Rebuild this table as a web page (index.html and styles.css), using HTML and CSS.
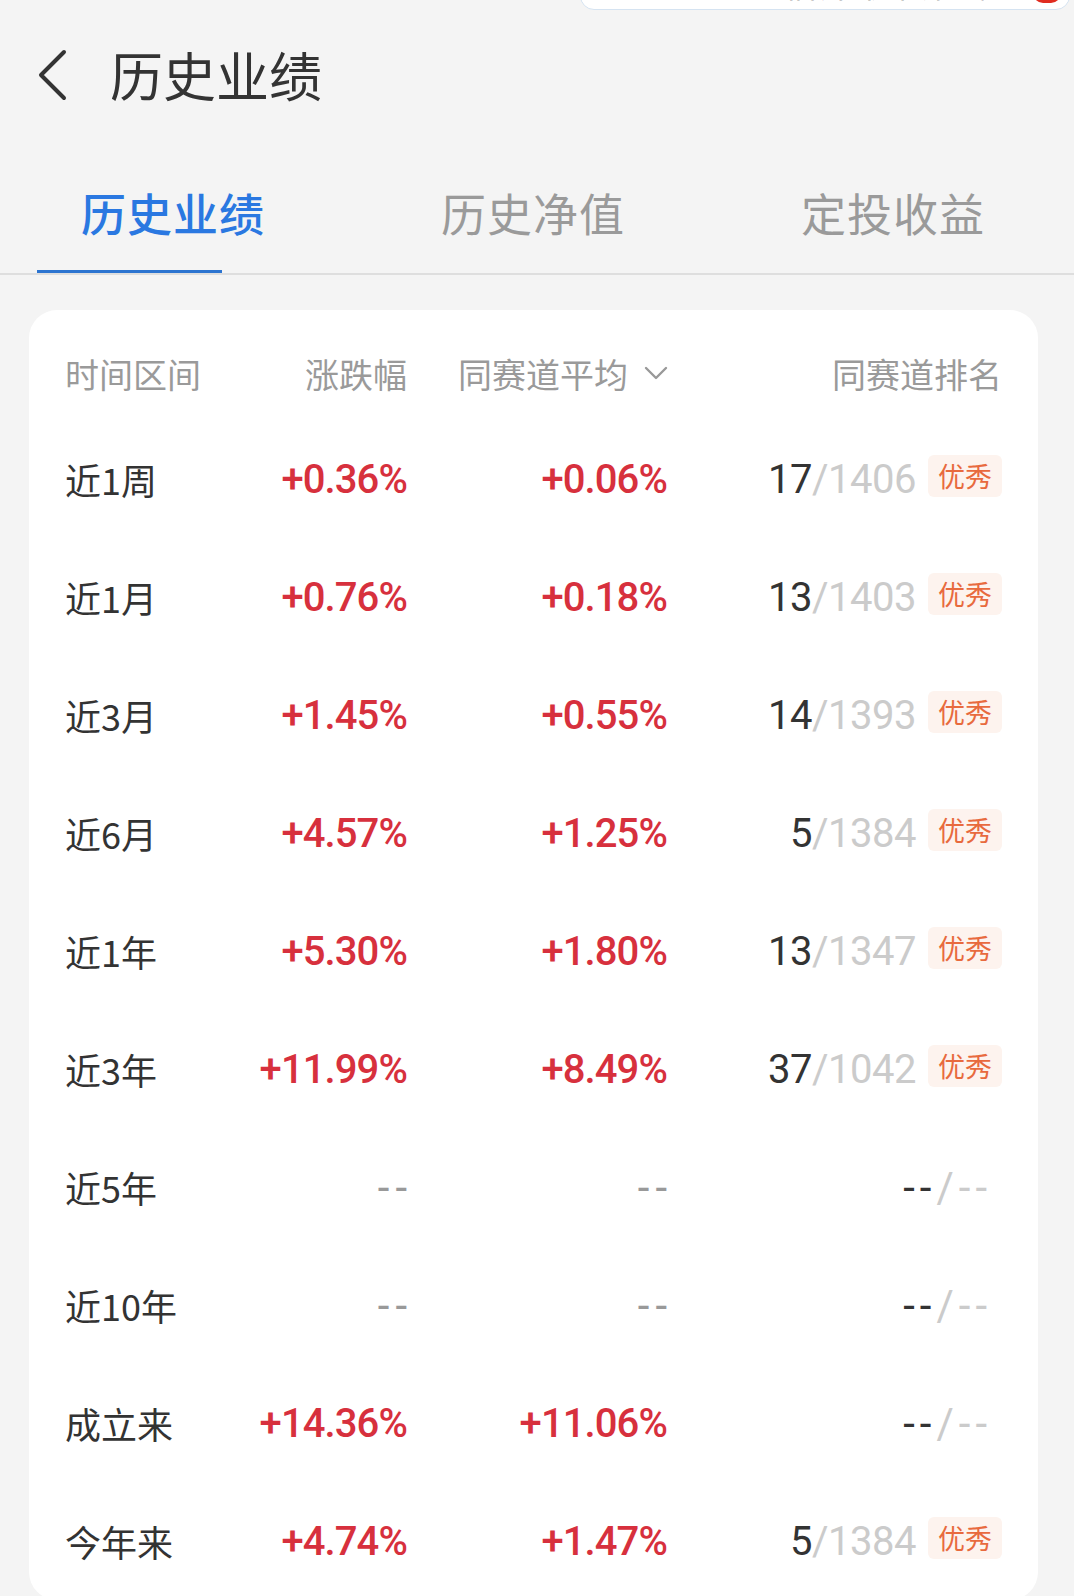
FILE: index.html
```html
<!DOCTYPE html>
<html lang="zh-CN">
<head>
<meta charset="utf-8">
<title>历史业绩</title>
<link rel="stylesheet" href="styles.css">
</head>
<body>
<div class="toast"><span class="toast-text">净值估算 仅供参考</span><span class="toast-icon"></span></div>

<header class="topbar">
  <svg class="back" width="34" height="52" viewBox="0 0 34 52"><polyline points="29,3 6,26 29,49" fill="none" stroke="#333" stroke-width="4" stroke-linecap="round" stroke-linejoin="round"/></svg>
  <h1 class="title">历史业绩</h1>
</header>

<nav class="tabs">
  <div class="tab active">历史业绩</div>
  <div class="tab">历史净值</div>
  <div class="tab">定投收益</div>
</nav>
<div class="indicator"></div>
<div class="divider"></div>

<section class="card">
  <div class="row head">
    <div class="c1">时间区间</div>
    <div class="c2">涨跌幅</div>
    <div class="c3">同赛道平均<svg class="caret" width="24" height="16" viewBox="0 0 24 16"><polyline points="2,3 12,13 22,3" fill="none" stroke="#999" stroke-width="2.4" stroke-linecap="round" stroke-linejoin="round"/></svg></div>
    <div class="c4">同赛道排名</div>
  </div>

  <div class="row"><div class="c1 label">近1周</div><div class="c2 val">+0.36%</div><div class="c3 val">+0.06%</div><div class="c4"><span class="rank"><b>17</b><i>/1406</i></span><span class="tag">优秀</span></div></div>
  <div class="row"><div class="c1 label">近1月</div><div class="c2 val">+0.76%</div><div class="c3 val">+0.18%</div><div class="c4"><span class="rank"><b>13</b><i>/1403</i></span><span class="tag">优秀</span></div></div>
  <div class="row"><div class="c1 label">近3月</div><div class="c2 val">+1.45%</div><div class="c3 val">+0.55%</div><div class="c4"><span class="rank"><b>14</b><i>/1393</i></span><span class="tag">优秀</span></div></div>
  <div class="row"><div class="c1 label">近6月</div><div class="c2 val">+4.57%</div><div class="c3 val">+1.25%</div><div class="c4"><span class="rank"><b>5</b><i>/1384</i></span><span class="tag">优秀</span></div></div>
  <div class="row"><div class="c1 label">近1年</div><div class="c2 val">+5.30%</div><div class="c3 val">+1.80%</div><div class="c4"><span class="rank"><b>13</b><i>/1347</i></span><span class="tag">优秀</span></div></div>
  <div class="row"><div class="c1 label">近3年</div><div class="c2 val">+11.99%</div><div class="c3 val">+8.49%</div><div class="c4"><span class="rank"><b>37</b><i>/1042</i></span><span class="tag">优秀</span></div></div>
  <div class="row"><div class="c1 label">近5年</div><div class="c2 none">--</div><div class="c3 none">--</div><div class="c4"><span class="rank empty"><b>--</b><i>/--</i></span></div></div>
  <div class="row"><div class="c1 label">近10年</div><div class="c2 none">--</div><div class="c3 none">--</div><div class="c4"><span class="rank empty"><b>--</b><i>/--</i></span></div></div>
  <div class="row"><div class="c1 label">成立来</div><div class="c2 val">+14.36%</div><div class="c3 val">+11.06%</div><div class="c4"><span class="rank empty"><b>--</b><i>/--</i></span></div></div>
  <div class="row"><div class="c1 label">今年来</div><div class="c2 val">+4.74%</div><div class="c3 val">+1.47%</div><div class="c4"><span class="rank"><b>5</b><i>/1384</i></span><span class="tag">优秀</span></div></div>
</section>
</body>
</html>
```

FILE: styles.css
```css
html, body {
  margin: 0;
  padding: 0;
  overflow: hidden;
}
body {
  background: #f4f4f4;
  font-family: "Noto Sans CJK SC", "Noto Sans", sans-serif;
  color: #333;
  position: relative;
  width: 1074px;
  height: 1596px;
}

.toast {
  position: absolute;
  left: 580px;
  top: -40px;
  width: 490px;
  height: 50px;
  box-sizing: border-box;
  background: #fff;
  border: 1px solid #d5e3f1;
  border-radius: 14px;
}
.toast-text {
  position: absolute;
  left: 136px;
  top: 0;
  font-size: 32px;
  line-height: 44px;
  color: #222;
  letter-spacing: 2px;
}
.toast-icon {
  position: absolute;
  left: 452px;
  top: 20px;
  width: 28px;
  height: 22px;
  border-radius: 0 0 10px 10px;
  background: #e02c20;
}

.topbar {
  height: 155px;
  display: flex;
  align-items: center;
  padding-left: 35px;
  padding-bottom: 6px;
  box-sizing: border-box;
}
.back {
  display: block;
  margin-right: 41px;
}
.title {
  margin: 0;
  font-size: 53px;
  font-weight: 400;
  line-height: 1;
  color: #333;
}

.tabs {
  display: flex;
  height: 115px;
  margin-left: -7px;
  padding-top: 31px;
  box-sizing: border-box;
}
.tab {
  width: 360px;
  text-align: center;
  font-size: 45px;
  line-height: 54px;
  color: #9a9a9a;
  letter-spacing: 1px;
}
.tab.active {
  color: #2a78e1;
  font-weight: 500;
}
.indicator {
  margin-left: 37px;
  width: 185px;
  height: 3px;
  background: #2c74d0;
}
.divider {
  height: 2px;
  background: #dedede;
}

.card {
  margin: 35px 36px 0 29px;
  background: #fff;
  border-radius: 28px;
  padding: 22px 36px 0 36px;
  height: 1290px;
  box-sizing: border-box;
}

.row {
  display: grid;
  grid-template-columns: 170px 172px 260px 1fr;
  align-items: center;
  height: 118px;
}
.row.head {
  height: 88px;
  font-size: 34px;
  color: #9a9a9a;
  padding-bottom: 6px;
  box-sizing: border-box;
}
.c2, .c3, .c4 {
  text-align: right;
}
.head .c3 {
  display: flex;
  justify-content: flex-end;
  align-items: center;
}
.caret {
  margin-left: 16px;
  margin-right: -1px;
}

.label {
  font-size: 36px;
  color: #333;
}
.val {
  font-family: Roboto, "Noto Sans", sans-serif;
  font-weight: 500;
  font-size: 40px;
  letter-spacing: -0.9px;
  color: #d7303d;
}
.none {
  font-family: Roboto, sans-serif;
  font-size: 42px;
  color: #999;
  letter-spacing: 6px;
  margin-right: -6px;
}
.c4 {
  display: flex;
  justify-content: flex-end;
  align-items: center;
}
.rank {
  font-family: Roboto, "Noto Sans", sans-serif;
  font-size: 40px;
  letter-spacing: -0.5px;
}
.rank b {
  font-weight: 400;
  color: #333;
}
.rank i {
  font-style: normal;
  color: #cbcbcb;
}
.rank.empty {
  margin-right: 10px;
  letter-spacing: 5px;
  font-size: 42px;
}
.tag {
  margin-left: 12px;
  width: 74px;
  height: 42px;
  border-radius: 6px;
  background: #fdf3ee;
  color: #e86a3e;
  font-size: 27px;
  line-height: 42px;
  text-align: center;
  margin-top: -6px;
}
```
